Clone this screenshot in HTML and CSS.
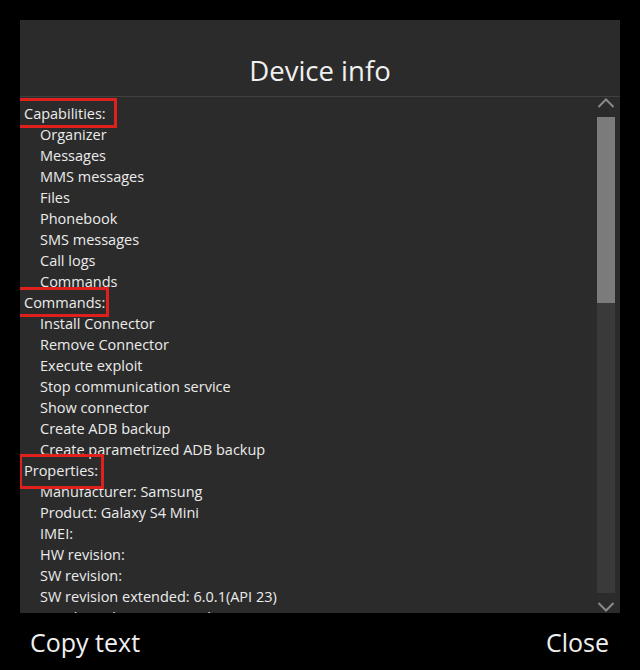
FILE: index.html
```html
<!DOCTYPE html>
<html>
<head>
<meta charset="utf-8">
<link rel="stylesheet" href="styles.css">
</head>
<body>
<div class="dialog">
  <div class="header"><h1 class="title">Device info</h1></div>
  <div class="body">
    <div class="list">
      <div class="row head"><span class="mark mark-cap">Capabilities:</span></div>
      <div class="row item">Organizer</div>
      <div class="row item">Messages</div>
      <div class="row item">MMS messages</div>
      <div class="row item">Files</div>
      <div class="row item">Phonebook</div>
      <div class="row item">SMS messages</div>
      <div class="row item">Call logs</div>
      <div class="row item">Commands</div>
      <div class="row head"><span class="mark mark-cmd">Commands:</span></div>
      <div class="row item">Install Connector</div>
      <div class="row item">Remove Connector</div>
      <div class="row item">Execute exploit</div>
      <div class="row item">Stop communication service</div>
      <div class="row item">Show connector</div>
      <div class="row item">Create ADB backup</div>
      <div class="row item">Create parametrized ADB backup</div>
      <div class="row head"><span class="mark mark-prop">Properties:</span></div>
      <div class="row item">Manufacturer: Samsung</div>
      <div class="row item">Product: Galaxy S4 Mini</div>
      <div class="row item">IMEI:</div>
      <div class="row item">HW revision:</div>
      <div class="row item">SW revision:</div>
      <div class="row item">SW revision extended: 6.0.1(API 23)</div>
      <div class="row item">Serial number: 32045B1d</div>
    </div>
    <div class="scrollbar">
      <div class="arrow">
        <svg width="18" height="12" viewBox="0 0 18 12"><path d="M1.5 10 L9 2.5 L16.5 10" fill="none" stroke="#8a8a8a" stroke-width="2"/></svg>
      </div>
      <div class="track">
        <div class="thumb"></div>
      </div>
      <div class="arrow arrow-down">
        <svg width="18" height="12" viewBox="0 0 18 12"><path d="M1.5 2 L9 9.5 L16.5 2" fill="none" stroke="#8a8a8a" stroke-width="2"/></svg>
      </div>
    </div>
  </div>
</div>
<div class="footer">
  <span class="btn">Copy text</span>
  <span class="btn">Close</span>
</div>
</body>
</html>
```
FILE: styles.css
```css
html, body {
  margin: 0;
  padding: 0;
  background: #000;
  height: 670px;
  overflow: hidden;
  font-family: "Open Sans", "Noto Sans", sans-serif;
  color: #ebebeb;
}
.dialog {
  margin: 20px 20px 0 20px;
  height: 593px;
  background: #2b2b2b;
  display: flex;
  flex-direction: column;
  overflow: hidden;
}
.header {
  height: 77px;
  flex: none;
  border-bottom: 1px solid #404040;
  display: flex;
  align-items: flex-end;
  justify-content: center;
  box-sizing: border-box;
}
.title {
  margin: 0 0 8px 0;
  font-weight: 400;
  font-size: 27.5px;
  line-height: 34px;
  color: #f0f0f0;
}
.body {
  flex: 1;
  display: flex;
  min-height: 0;
}
.list {
  flex: 1;
  padding-top: 6px;
  overflow: hidden;
  font-size: 14.5px;
}
.row {
  height: 21px;
  line-height: 21px;
  white-space: nowrap;
}
.head {
  padding-left: 4px;
}
.item {
  padding-left: 20px;
}
.mark {
  position: relative;
}
.mark::after {
  content: "";
  position: absolute;
  left: -7px;
  right: -6px;
  top: -6px;
  bottom: -5px;
  border: 3px solid #e0201c;
}
.mark-cap::after {
  right: -11px;
}
.mark-cmd::after {
  right: -4px;
}
.mark-prop::after {
  left: -5px;
  right: -6px;
  top: -7px;
  bottom: -9px;
}
.scrollbar {
  width: 18px;
  margin-right: 5px;
  display: flex;
  flex-direction: column;
}
.arrow {
  height: 20px;
  flex: none;
  display: flex;
  justify-content: center;
  align-items: flex-start;
}
.arrow-down {
  align-items: flex-end;
}
.track {
  flex: 1;
  background: #3a3a3a;
}
.thumb {
  height: 186px;
  background: #7b7b7b;
}
.footer {
  height: 57px;
  display: flex;
  justify-content: space-between;
  align-items: center;
  padding: 0 31px 0 30px;
  font-size: 25px;
  color: #f0f0f0;
}
```
